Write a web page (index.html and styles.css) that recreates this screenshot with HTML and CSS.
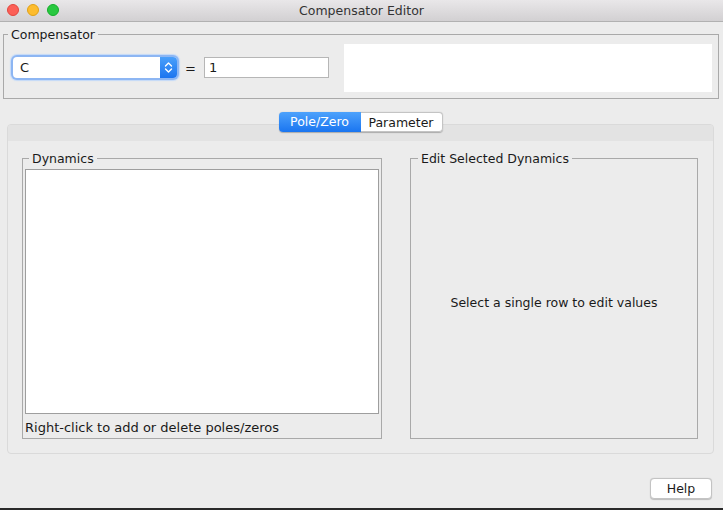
FILE: index.html
```html
<!DOCTYPE html>
<html>
<head>
<meta charset="utf-8">
<link rel="stylesheet" href="styles.css">
</head>
<body>
<div class="window">
  <div class="titlebar">
    <div class="lights">
      <span class="light red"></span>
      <span class="light yellow"></span>
      <span class="light green"></span>
    </div>
    <div class="title">Compensator Editor</div>
  </div>

  <fieldset class="group comp">
    <legend>Compensator</legend>
    <div class="comp-row">
      <div class="combo">
        <span class="combo-text">C</span>
        <span class="combo-btn">
          <svg width="9" height="13" viewBox="0 0 9 13"><path d="M1.5 5 L4.5 2 L7.5 5 M1.5 8 L4.5 11 L7.5 8" fill="none" stroke="#fff" stroke-width="1.4" stroke-linecap="round" stroke-linejoin="round"/></svg>
        </span>
      </div>
      <span class="eq">=</span>
      <div class="textfield">1</div>
      <div class="preview"></div>
    </div>
  </fieldset>

  <div class="tabs-wrap">
    <div class="tabs">
      <span class="tab active">Pole/Zero</span>
      <span class="tab">Parameter</span>
    </div>
    <div class="pane">
      <div class="pane-band"></div>
      <div class="pane-body">
        <fieldset class="group dyn">
          <legend>Dynamics</legend>
          <div class="list"></div>
          <div class="hint">Right-click to add or delete poles/zeros</div>
        </fieldset>
        <fieldset class="group edit">
          <legend>Edit Selected Dynamics</legend>
          <div class="edit-msg">Select a single row to edit values</div>
        </fieldset>
      </div>
    </div>
  </div>

  <div class="footer">
    <button class="btn">Help</button>
  </div>
</div>
</body>
</html>
```

FILE: styles.css
```css
* { box-sizing: border-box; }
html, body { margin: 0; padding: 0; }
body {
  width: 723px;
  height: 510px;
  background: #ececec;
  font-family: "DejaVu Sans", "Liberation Sans", sans-serif;
  font-size: 12px;
  color: #1a1a1a;
  overflow: hidden;
}
.window {
  width: 723px;
  height: 510px;
  border-bottom: 2px solid #2a2a2a;
  background: #ececec;
}
.titlebar {
  height: 22px;
  background: linear-gradient(#e9e7e9, #d2d0d2);
  border-bottom: 1px solid #b1b1b1;
  display: flex;
  align-items: center;
  justify-content: center;
  position: relative;
}
.lights {
  position: absolute;
  left: 7px;
  top: 4px;
  display: flex;
  gap: 8px;
}
.light {
  width: 12px;
  height: 12px;
  border-radius: 50%;
  display: block;
}
.red { background: #fc5f57; border: 0.5px solid #e2463f; }
.yellow { background: #fdbc2e; border: 0.5px solid #e1a116; }
.green { background: #29c840; border: 0.5px solid #14ae2a; }
.title {
  font-size: 12.5px;
  color: #333;
}

.group {
  border: 1px solid #a9a9a9;
  margin: 0;
  padding: 0;
}
.group legend {
  padding: 2px 3px 0 3px;
  line-height: 14px;
  font-size: 12.5px;
}

.comp {
  margin: 4px 4px 0 3px;
  padding: 2px 6px 6px 9px;
}
.comp legend { margin-left: -5px; }
.comp-row {
  display: flex;
  align-items: center;
}
.combo {
  width: 164px;
  height: 21px;
  margin-bottom: 2px;
  display: flex;
  border-radius: 4px;
  background: #fff;
  box-shadow: 0 0 0 2px #8db6f3, 0 0 1px 3px #c4daf9;
  overflow: hidden;
}
.combo-text {
  flex: 1;
  padding-left: 7px;
  line-height: 21px;
  font-size: 13px;
}
.combo-btn {
  width: 17px;
  background: linear-gradient(#4aa0fb, #1b74ef);
  display: flex;
  align-items: center;
  justify-content: center;
}
.eq {
  margin: 0 8px 0 8px;
  font-size: 13px;
}
.textfield {
  width: 125px;
  height: 21px;
  margin-bottom: 2px;
  border: 1px solid #b6b6b6;
  background: #fff;
  padding-left: 4px;
  line-height: 19px;
  font-size: 13px;
}
.preview {
  width: 368px;
  height: 48px;
  background: #fff;
  margin-left: auto;
}

.tabs-wrap {
  margin: 13px 9px 0 7px;
  display: flex;
  flex-direction: column;
  align-items: center;
}
.tabs {
  display: flex;
  height: 20px;
  margin-bottom: -8px;
  position: relative;
  z-index: 1;
  border-radius: 4px;
  box-shadow: 0 0.5px 1px rgba(0,0,0,0.25);
}
.tab {
  width: 82px;
  height: 20px;
  line-height: 20px;
  text-align: center;
  background: #fff;
  border: 1px solid #c4c4c4;
  border-left: none;
  border-radius: 0 4px 4px 0;
  font-size: 12.5px;
}
.tab.active {
  background: linear-gradient(#4da2fc, #1a75f0);
  border: none;
  color: #fff;
  border-radius: 4px 0 0 4px;
}
.pane {
  align-self: stretch;
  height: 330px;
  border: 1px solid #dadada;
  border-radius: 4px;
  background: #ececec;
  display: flex;
  flex-direction: column;
}
.pane-band {
  height: 16px;
  background: #e3e3e3;
  border-radius: 3px 3px 0 0;
}
.pane-body {
  flex: 1;
  display: flex;
  padding: 9px 15px 14px 14px;
  gap: 28px;
}
.dyn {
  width: 360px;
  padding: 3px 2px 1px 2px;
  display: flex;
  flex-direction: column;
}
.dyn legend { margin-left: 4px; }
.edit legend { margin-left: 7px; }
.list {
  height: 245px;
  background: #fff;
  border: 1px solid #9e9e9e;
}
.hint {
  margin-top: 6px;
  line-height: 16px;
  font-size: 13px;
}
.edit {
  flex: 1;
  display: flex;
  align-items: center;
  justify-content: center;
}
.edit-msg {
  font-size: 12.5px;
}

.footer {
  display: flex;
  justify-content: flex-end;
  padding: 24px 11px 0 0;
}
.btn {
  width: 62px;
  height: 21px;
  background: #fff;
  border: 1px solid #c3c3c3;
  border-radius: 4px;
  box-shadow: 0 0.5px 1px rgba(0,0,0,0.2);
  font-family: inherit;
  font-size: 12.5px;
  color: #1a1a1a;
  padding: 0;
}
```
